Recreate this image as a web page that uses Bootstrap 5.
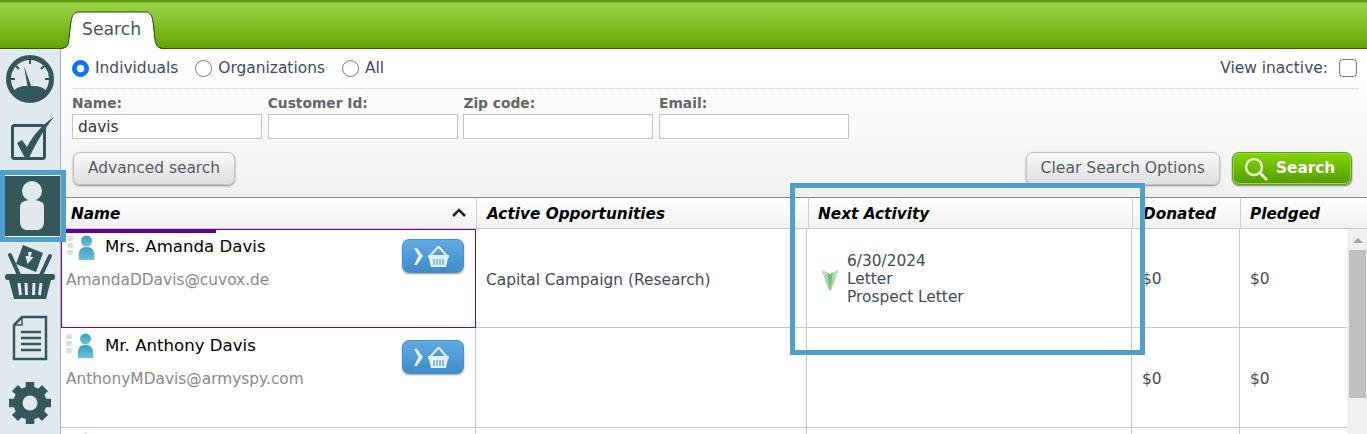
<!DOCTYPE html>
<html lang="en">
<head>
    <meta charset="UTF-8">
    <title>Search</title>
    <link rel="stylesheet" href="https://cdn.jsdelivr.net/npm/bootstrap@5.3.0/dist/css/bootstrap.min.css">
    <style>
        html, body { height: 434px; overflow: hidden; }
        body { font-family: "DejaVu Sans", Verdana, sans-serif; font-size: 15.4px; color: #444b55; background: #fff; position: relative; }
        .topbar { height: 49px; position: relative; background: linear-gradient(#5f9e10 0, #5f9e10 2px, #98d444 3px, #8ccb36 14px, #6aa80a 44px, #5f9c04 48px); border-bottom: 1px solid #2e5a00; }
        .tab-shape { position: absolute; left: 60px; top: 10px; }
        .tab-label { position: absolute; left: 82px; top: 17px; font-size: 17.2px; line-height: 24px; color: #4b5560; }
        .shell { height: 385px; }
        .side-rail { width: 61px; flex: none; background: #dfe9ef; border-right: 1px solid #a9b2b6; }
        .rail-item { display: flex; align-items: center; justify-content: center; }
        .rail-item svg { display: block; }
        .rail-gauge { height: 60px; }
        .rail-check { height: 62px; margin-bottom: 4px; padding-left: 5px; }
        .rail-active { height: 62px; background: #34575c; margin-left: 3px; border-top: 1px solid #fff; border-bottom: 1px solid #fff; }
        .rail-basket { height: 70px; }
        .rail-doc { height: 62px; }
        .rail-gear { height: 68px; }
        .main-pane { flex: 1; min-width: 0; }
        .filter-panel { height: 149px; background: linear-gradient(#fff 0, #fff 30px, #f0f0f0 148px); border-bottom: 1px solid #8c8c8c; padding: 0 15px 0 11px; }
        .radio-row { height: 40px; border-bottom: 1px dotted #c4c4c4; margin-right: -5px; font-size: 15.45px; }
        .radio-row .form-check-input { width: 17px; height: 17px; margin: 0 6px 0 0; border-color: #767676; border-width: 1px; float: none; }
        .radio-row .form-check-input:checked { background-color: #0a75ff; border-color: #0a75ff; }
        .radio-pick { margin-right: 17px; }
        .radio-row .inactive-box.form-check-input { width: 18px; height: 18px; margin: 0 0 0 11px; border: 1px solid #777; border-radius: 4px; }
        .field-wrap { width: 190px; margin-right: 5.7px; }
        .field-wrap label { display: block; font-size: 13.8px; font-weight: 700; color: #666; line-height: 16px; margin-top: 6px; }
        .field-wrap input { display: block; width: 190px; height: 25px; border: 1px solid #c4c4c4; border-radius: 0; padding: 0 5px; font: inherit; color: #333; margin-top: 3px; }
        .grey-btn { height: 33px; border: 1px solid #c2c2c2; border-radius: 7px; background: linear-gradient(#fafafa, #dedede); box-shadow: 0 1px 2px #888; color: #555c66; padding: 0 14px; }
        .clear-btn { margin-right: 12px; font-size: 15.6px; }
        .green-btn { height: 33px; width: 120px; border: 1px solid #5f9b1c; border-radius: 7px; background: linear-gradient(#84d404, #559c00); box-shadow: inset 0 0 0 1px #98dc40, 0 1px 2px #777; font-weight: 700; font-size: 15.3px; color: #fff; padding: 0 0 0 11px; }
        .btn-line { margin-top: 13px; padding-left: 1px; }
        .grid-head { height: 31px; border-bottom: 1px solid #c8c8c8; background: linear-gradient(#fff, #f1f1f1); font-style: italic; font-weight: 700; font-size: 15.3px; color: #000; }
        .grid-head > div { border-right: 1px solid #cfcfcf; padding: 5px 0 0 10px; }
        .grid-head .col-next, .grid-head .col-pled { padding-left: 9px; }
        .col-name { width: 416px; flex: none; }
        .col-opp { width: 332px; flex: none; }
        .col-next { width: 324px; flex: none; }
        .col-don { width: 108px; flex: none; }
        .col-pled { width: 108px; flex: none; }
        .sort-caret { margin: 4px 10px 0 0; }
        .grid-scroll { height: 205px; overflow: hidden; }
        .grid-rows { flex: 1; min-width: 0; }
        .grid-row { height: 100px; border-bottom: 1px solid #c8c8c8; }
        .grid-row > div { border-right: 1px solid #c8c8c8; }
        .grid-row .body-name { width: 415px; flex: none; position: relative; padding: 5px 0 0 5px; }
        .body-opp { width: 331px; flex: none; }
        .body-next { width: 325px; flex: none; }
        .body-don, .body-pled { width: 108px; flex: none; }
        .cell-mid { display: flex; align-items: center; padding: 4px 0 0 10px; }
        .body-opp.cell-mid { padding-top: 5px; }
        .body-next.cell-mid { padding: 2px 0 0 14px; }
        .grid-row.row-picked { height: 99px; border-bottom: 1px solid #c8c8c8; }
        .grid-row.row-picked > .body-name { height: 99px; border: 1px solid #7a00a8; padding-left: 4px; }
        .picked-bar { position: absolute; left: -1px; top: -1px; width: 155px; height: 4px; background: #660099; }
        .drag-dots { width: 7px; margin: 1px 4px 0 0; }
        .drag-dots i { display: block; width: 6px; height: 5px; margin-bottom: 2px; border-radius: 2px; background: #dcdcdc; }
        .person-name { font-size: 16.6px; line-height: 24px; color: #000; margin: 1px 0 0 11px; }
        .person-mail { color: #8a8a8a; line-height: 20px; margin-top: 11px; }
        .row-picked .drag-dots { margin-left: 1px; }
        .row-picked .person-name { margin: 0 0 0 10px; }
        .row-picked .person-mail { margin-top: 10px; }
        .basket-btn { position: absolute; right: 11px; top: 12px; width: 62px; height: 34px; border: 1px solid #4a8fc6; border-radius: 7px; background: linear-gradient(#5fabe4, #3f8ccb); box-shadow: 0 1px 2px #999; padding: 0; display: flex; align-items: center; justify-content: center; }
        .row-picked .basket-btn { top: 9px; }
        .fake-scroll { width: 20px; flex: none; background: #f0f0f0; position: relative; }
        .scroll-thumb { position: absolute; left: 2px; top: 21px; width: 17px; height: 148px; background: #c0c0c0; }
        .scroll-arrow { position: absolute; left: 6px; top: 9px; border: 5px solid transparent; border-top: 0; border-bottom: 5px solid #a3a3a3; }
        .activity-text { line-height: 18px; margin-left: 8px; }
        .callout { position: absolute; border: 5px solid #4f9fd1; pointer-events: none; }
        .callout-rail { left: 0; top: 170px; width: 66px; height: 72px; }
        .callout-next { left: 790px; top: 183px; width: 355px; height: 172px; }
    </style>
</head>
<body>

    <!-- Green bar with tab -->
    <div class="topbar">
        <svg class="tab-shape" width="104" height="39" viewBox="0 0 104 39">
            <path d="M2 39C6 38 8 36 8.500 32L11 12C12 5 14 2 19 2H86C90 2 92 5 93 12L95 30C96 36 98 38 102 39z" fill="#fff"/>
            <path d="M2 38C6 38 8 36 8.500 32L11 12C12 5 14 2 19 2H86C90 2 92 5 93 12L95 30C96 36 98 38 102 38" fill="none" stroke="#1f4f00"/>
        </svg>
        <span class="tab-label">Search</span>
    </div>

    <div class="shell d-flex">
        <!-- Left rail -->
        <div class="side-rail">
            <div class="rail-item rail-gauge">
                <svg width="48" height="48" viewBox="0 0 48 48"><circle cx="24" cy="24" r="21.500" fill="none" stroke="#34575c" stroke-width="5"/><path d="M7 37C11 31 17 31 24 31s13 0 17 6c-4 6-10 9-17 9S11 43 7 37z" fill="#34575c"/><path d="M18 11l3.500 21h4z" fill="#34575c"/><path d="M24 4v5M10 11l3 3M38 11l-3 3M4 24h5M44 24h-5" stroke="#34575c" stroke-width="2"/></svg>
            </div>
            <div class="rail-item rail-check">
                <svg width="44" height="46" viewBox="0 0 44 46"><rect x="1.500" y="8.500" width="32" height="33" rx="2" fill="none" stroke="#34575c" stroke-width="3"/><path d="M6 26l5-3 5 7C22 18 32 7 43 0 34 11 25 26 18 41h-4z" fill="#34575c"/></svg>
            </div>
            <div class="rail-item rail-active">
                <svg width="26" height="50" viewBox="0 0 26 50"><circle cx="13" cy="10" r="10" fill="#dfe9ef"/><path d="M1 26c0-5 4-7 12-7s12 2 12 7v15c0 5-3 8-7 8H8c-4 0-7-3-7-8z" fill="#dfe9ef"/></svg>
            </div>
            <div class="rail-item rail-basket">
                <svg width="52" height="54" viewBox="0 0 52 54"><path d="M19 0l20 8-7 19-20-8z" fill="#34575c"/><path d="M24 7h4l-1.500 5h3l-6 7-2-8h3z" fill="#dfe9ef"/><path d="M6 10l9 20M46 11l-9 19" stroke="#34575c" stroke-width="4" stroke-linecap="round"/><rect x="1" y="29" width="50" height="6" rx="2.500" fill="#34575c"/><path d="M5 35h42l-5 19H10z" fill="#34575c"/><path d="M15 38l1.500 12M22 38l.5 12M30 38l-.5 12M37 38l-1.500 12" stroke="#dfe9ef" stroke-width="3"/></svg>
            </div>
            <div class="rail-item rail-doc">
                <svg width="36" height="46" viewBox="0 0 36 46"><path d="M10 2h24v42H2V10z" fill="none" stroke="#34575c" stroke-width="2.500"/><path d="M10 2v8H2" fill="none" stroke="#34575c" stroke-width="1.500"/><path d="M9 17h20M9 23h20M9 29h20M9 35h20" stroke="#34575c" stroke-width="2.500"/></svg>
            </div>
            <div class="rail-item rail-gear">
                <svg width="44" height="44" viewBox="0 0 44 44"><circle cx="22" cy="22" r="12" fill="none" stroke="#34575c" stroke-width="9"/><path d="M22 1v42M1 22h42M7 7l30 30M37 7L7 37" stroke="#34575c" stroke-width="8.500"/><circle cx="22" cy="22" r="7.500" fill="#dfe9ef"/></svg>
            </div>
        </div>

        <div class="main-pane">
            <!-- Search filters -->
            <div class="filter-panel">
                <div class="radio-row d-flex align-items-center">
                    <label class="d-flex align-items-center radio-pick"><input class="form-check-input" type="radio" name="kind" checked>Individuals</label>
                    <label class="d-flex align-items-center radio-pick"><input class="form-check-input" type="radio" name="kind">Organizations</label>
                    <label class="d-flex align-items-center radio-pick"><input class="form-check-input" type="radio" name="kind">All</label>
                    <label class="d-flex align-items-center ms-auto">View inactive:<input class="form-check-input inactive-box" type="checkbox"></label>
                </div>
                <div class="d-flex">
                    <div class="field-wrap"><label>Name:</label><input type="text" value="davis"></div>
                    <div class="field-wrap"><label>Customer Id:</label><input type="text"></div>
                    <div class="field-wrap"><label>Zip code:</label><input type="text"></div>
                    <div class="field-wrap"><label>Email:</label><input type="text"></div>
                </div>
                <div class="d-flex btn-line">
                    <button class="grey-btn" type="button">Advanced search</button>
                    <button class="grey-btn clear-btn ms-auto" type="button">Clear Search Options</button>
                    <button class="green-btn d-flex align-items-center" type="button">
                        <svg class="me-2" width="24" height="24" viewBox="0 0 24 24"><circle cx="10" cy="10" r="8" fill="none" stroke="#e6f5d0" stroke-width="2.500"/><path d="M16 16l7 7" stroke="#e6f5d0" stroke-width="3"/></svg>Search
                    </button>
                </div>
            </div>

            <!-- Results grid -->
            <div class="grid-head d-flex">
                <div class="col-name d-flex justify-content-between">Name
                    <svg class="sort-caret" width="14" height="12" viewBox="0 0 14 12"><path d="M1 9l6-6 6 6" fill="none" stroke="#222" stroke-width="2.500"/></svg>
                </div>
                <div class="col-opp">Active Opportunities</div>
                <div class="col-next">Next Activity</div>
                <div class="col-don">Donated</div>
                <div class="col-pled border-0">Pledged</div>
            </div>
            <div class="grid-scroll d-flex">
                <div class="grid-rows" id="grid-rows"></div>
                <div class="fake-scroll"><div class="scroll-arrow"></div><div class="scroll-thumb"></div></div>
            </div>
        </div>
    </div>

    <div class="callout callout-rail"></div>
    <div class="callout callout-next"></div>

    <script>
        const people = [
            { name: 'Mrs. Amanda Davis', mail: 'AmandaDDavis@cuvox.de', opp: 'Capital Campaign (Research)', next: ['6/30/2024', 'Letter', 'Prospect Letter'], amount: '$0', picked: true },
            { name: 'Mr. Anthony Davis', mail: 'AnthonyMDavis@armyspy.com', opp: '', next: null, amount: '$0' },
            { name: '', mail: '', opp: '', next: null, amount: '' }
        ];

        const personIcon = '<svg width="17" height="25" viewBox="0 0 17 25"><defs><linearGradient id="pg" x1="0" y1="0" x2="0" y2="1"><stop offset="0" stop-color="#3c9fc0"/><stop offset="1" stop-color="#6cc0da"/></linearGradient></defs><circle cx="8.500" cy="6" r="5.500" fill="url(#pg)"/><path d="M1 25c-1-9 1-13 7.500-13S17 16 16 25z" fill="url(#pg)"/></svg>';
        const basketIcon = '<svg width="50" height="26" viewBox="0 0 50 26"><path d="M6 5h3l6 8-6 9H6l4.500-9z" fill="#e3f1fb"/><path d="M22 13l8-9h1l8 9" fill="none" stroke="#e3f1fb" stroke-width="2"/><path d="M20 12h21v3h-1l-2 9H23l-2-9h-1z" fill="#e3f1fb"/><path d="M26 16v6M29 16v6M32 16v6M35 16v6" stroke="#4f9cd8" stroke-width="1.200"/></svg>';
        const nextIcon = '<svg width="18" height="23" viewBox="0 0 18 23"><defs><linearGradient id="ng" x1="0" y1="0" x2="0" y2="1"><stop offset="0" stop-color="#c2e8c4"/><stop offset="1" stop-color="#84cc90"/></linearGradient></defs><path d="M0 1l9 5 9-5-8 21H8z" fill="url(#ng)"/><path d="M9 6l3-1.500L9.500 18h-1L6 4.500z" fill="#74c082"/></svg>';

        document.getElementById('grid-rows').innerHTML = people.map(p => `
            <div class="grid-row d-flex ${p.picked ? 'row-picked' : ''}">
                <div class="body-name">
                    ${p.picked ? '<div class="picked-bar"></div>' : ''}
                    <div class="d-flex align-items-start">
                        <div class="drag-dots"><i></i><i></i><i></i></div>
                        ${personIcon}
                        ${p.name ? `<span class="person-name">${p.name}</span>` : ''}
                    </div>
                    ${p.mail ? `<div class="person-mail">${p.mail}</div>` : ''}
                    ${p.name ? `<button class="basket-btn" type="button">${basketIcon}</button>` : ''}
                </div>
                <div class="body-opp cell-mid">${p.opp}</div>
                <div class="body-next cell-mid">${p.next ? nextIcon + '<div class="activity-text">' + p.next.join('<br>') + '</div>' : ''}</div>
                <div class="body-don cell-mid">${p.amount}</div>
                <div class="body-pled cell-mid border-0">${p.amount}</div>
            </div>`).join('');
    </script>
</body>
</html>
